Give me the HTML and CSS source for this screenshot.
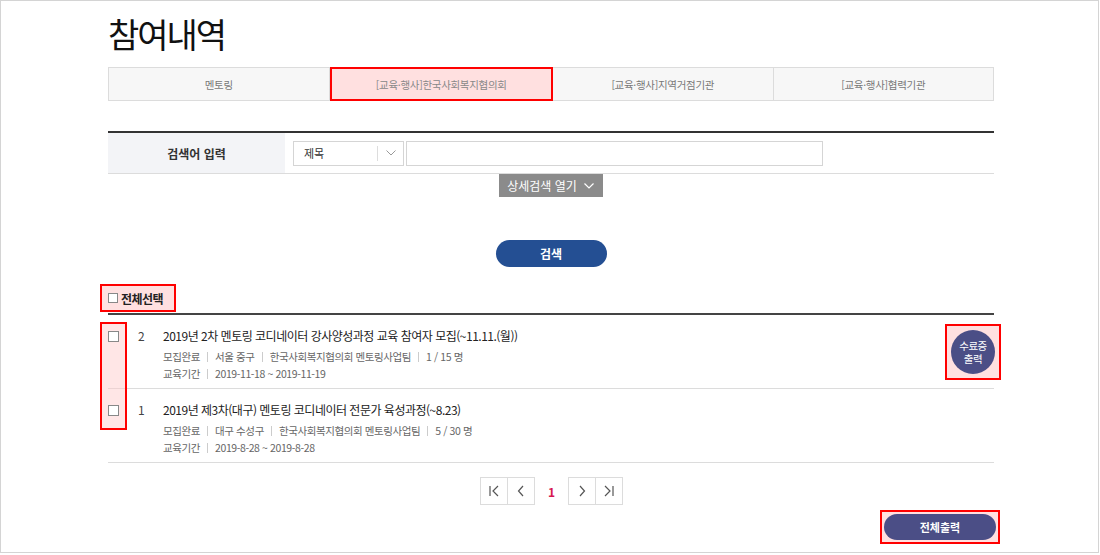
FILE: index.html
```html
<!DOCTYPE html>
<html lang="ko">
<head>
<meta charset="utf-8">
<title>참여내역</title>
<link rel="stylesheet" href="styles.css">
</head>
<body>
<div class="page">
  <div class="container">
    <h1 class="title">참여내역</h1>

    <ul class="tabs">
      <li class="tab">멘토링</li>
      <li class="tab active">[교육·행사]한국사회복지협의회</li>
      <li class="tab">[교육·행사]지역거점기관</li>
      <li class="tab">[교육·행사]협력기관</li>
    </ul>

    <div class="search">
      <div class="search-row">
        <div class="search-label">검색어 입력</div>
        <div class="search-field">
          <div class="select">
            <span class="select-text">제목</span>
            <span class="select-arrow">
              <svg width="10" height="6" viewBox="0 0 10 6"><path d="M0.5 0.5 L5 5 L9.5 0.5" fill="none" stroke="#999" stroke-width="1"/></svg>
            </span>
          </div>
          <div class="text-input"></div>
        </div>
      </div>
      <div class="detail-wrap">
        <button class="detail-btn">상세검색 열기
          <svg width="10" height="6" viewBox="0 0 10 6"><path d="M0.5 0.5 L5 5 L9.5 0.5" fill="none" stroke="#fff" stroke-width="1.2"/></svg>
        </button>
      </div>
      <div class="search-btn-wrap">
        <button class="search-btn">검색</button>
      </div>
    </div>

    <div class="select-all-wrap">
      <label class="select-all"><span class="chk"></span>전체선택</label>
    </div>

    <div class="list">
      <div class="chk-highlight"></div>
      <div class="item">
        <span class="chk item-chk"></span>
        <span class="num">2</span>
        <div class="info">
          <div class="item-title">2019년 2차 멘토링 코디네이터 강사양성과정 교육 참여자 모집(~11.11.(월))</div>
          <div class="meta"><span>모집완료</span><span>서울 중구</span><span>한국사회복지협의회 멘토링사업팀</span><span>1 / 15 명</span></div>
          <div class="meta"><span>교육기간</span><span>2019-11-18 ~ 2019-11-19</span></div>
        </div>
        <div class="cert-wrap">
          <button class="cert-btn">수료증<br>출력</button>
        </div>
      </div>
      <div class="item">
        <span class="chk item-chk"></span>
        <span class="num">1</span>
        <div class="info">
          <div class="item-title">2019년 제3차(대구) 멘토링 코디네이터 전문가 육성과정(~8.23)</div>
          <div class="meta"><span>모집완료</span><span>대구 수성구</span><span>한국사회복지협의회 멘토링사업팀</span><span>5 / 30 명</span></div>
          <div class="meta"><span>교육기간</span><span>2019-8-28 ~ 2019-8-28</span></div>
        </div>
      </div>
    </div>

    <div class="pager">
      <a class="pg">
        <svg width="12" height="12" viewBox="0 0 12 12"><path d="M2 1 V11 M10 1 L5 6 L10 11" fill="none" stroke="#555" stroke-width="1.2"/></svg>
      </a>
      <a class="pg">
        <svg width="12" height="12" viewBox="0 0 12 12"><path d="M8 1 L3.5 6 L8 11" fill="none" stroke="#555" stroke-width="1.2"/></svg>
      </a>
      <span class="pg-current">1</span>
      <a class="pg">
        <svg width="12" height="12" viewBox="0 0 12 12"><path d="M4 1 L8.5 6 L4 11" fill="none" stroke="#555" stroke-width="1.2"/></svg>
      </a>
      <a class="pg">
        <svg width="12" height="12" viewBox="0 0 12 12"><path d="M2 1 L7 6 L2 11 M10 1 V11" fill="none" stroke="#555" stroke-width="1.2"/></svg>
      </a>
    </div>

    <div class="print-wrap">
      <div class="print-hl">
        <button class="print-btn">전체출력</button>
      </div>
    </div>
  </div>
</div>
</body>
</html>
```

FILE: styles.css
```css
* { box-sizing: border-box; }
html, body { margin: 0; padding: 0; background: #fff; }
body {
  font-family: "Noto Sans CJK KR", "Noto Sans", sans-serif;
  color: #333;
}
button { font-family: inherit; cursor: pointer; }

.page {
  width: 1099px;
  height: 553px;
  border: 1px solid #d4d4d4;
  overflow: hidden;
}
.container {
  width: 886px;
  margin-left: 107px;
}

.title {
  margin: 0;
  padding-top: 9px;
  height: 66px;
  font-size: 34px;
  line-height: 48px;
  font-weight: 400;
  letter-spacing: -2px;
  color: #111;
}

.tabs {
  list-style: none;
  margin: 0;
  padding: 0;
  display: flex;
  height: 34px;
}
.tab {
  flex: 1;
  display: flex;
  align-items: center;
  justify-content: center;
  background: #f7f7f7;
  border: 1px solid #dcdcdc;
  border-left: none;
  font-size: 10.5px;
  color: #777;
  letter-spacing: -0.3px;
}
.tab:first-child { border-left: 1px solid #dcdcdc; }
.tab.active {
  background: #ffe0e0;
  border: 2px solid #f00;
  color: #888;
}

.search { margin-top: 30px; }
.search-row {
  display: flex;
  border-top: 2px solid #333;
  border-bottom: 1px solid #dcdcdc;
  height: 43px;
}
.search-label {
  width: 177px;
  background: #f3f4f7;
  display: flex;
  align-items: center;
  justify-content: center;
  font-size: 12px;
  font-weight: 700;
  color: #333;
}
.search-field {
  display: flex;
  align-items: center;
  padding-left: 8px;
  gap: 2px;
}
.select {
  width: 111px;
  height: 25px;
  border: 1px solid #d5d5d5;
  display: flex;
  align-items: center;
  font-size: 11px;
  color: #333;
}
.select-text { flex: 1; padding-left: 10px; }
.select-arrow {
  width: 26px;
  height: 15px;
  border-left: 1px solid #ddd;
  display: flex;
  align-items: center;
  justify-content: center;
}
.text-input {
  width: 417px;
  height: 25px;
  border: 1px solid #d5d5d5;
}

.detail-wrap { display: flex; justify-content: center; }
.detail-btn {
  width: 104px;
  height: 23px;
  margin-left: -1px;
  border: none;
  background: #8b8b8b;
  color: #fff;
  font-size: 12px;
  display: flex;
  align-items: center;
  justify-content: center;
  gap: 7px;
  padding: 0;
}

.search-btn-wrap {
  display: flex;
  justify-content: center;
  margin-top: 43px;
}
.search-btn {
  width: 111px;
  height: 27px;
  border: none;
  border-radius: 14px;
  background: #244f93;
  color: #fff;
  font-size: 12px;
  font-weight: 700;
  padding: 0;
}

.select-all-wrap {
  margin-top: 17px;
  margin-left: -8px;
  height: 29px;
}
.select-all {
  display: inline-flex;
  align-items: center;
  width: 76px;
  height: 28px;
  border: 2px solid #f00;
  background: #ffe0e0;
  padding-left: 6px;
  font-size: 12px;
  font-weight: 700;
  color: #222;
  letter-spacing: -0.5px;
}
.chk {
  display: inline-block;
  width: 10px;
  height: 10px;
  border: 1px solid #888;
  background: #fff;
  margin-right: 3px;
}

.list {
  position: relative;
  border-top: 2px solid #444;
}
.chk-highlight {
  position: absolute;
  left: -8px;
  top: 7px;
  width: 27px;
  height: 108px;
  border: 2px solid #f00;
  background: rgba(255, 200, 200, 0.45);
  pointer-events: none;
}
.item {
  display: flex;
  align-items: flex-start;
  border-bottom: 1px solid #dcdcdc;
  height: 74px;
  padding-top: 11px;
}
.item-chk {
  margin-top: 5px;
  margin-right: 0;
  width: 11px;
  height: 11px;
  position: relative;
  z-index: 1;
}
.num {
  width: 44px;
  padding-left: 19px;
  font-size: 12px;
  line-height: 20px;
  color: #444;
}
.info { flex: 1; }
.item-title {
  font-size: 12px;
  line-height: 20px;
  color: #222;
  letter-spacing: -0.5px;
}
.meta {
  font-size: 10.5px;
  line-height: 17px;
  color: #666;
  letter-spacing: -0.4px;
}
.item-title + .meta { margin-top: 2px; }
.meta span + span::before {
  content: "";
  display: inline-block;
  width: 1px;
  height: 10px;
  background: #ccc;
  margin: 0 7px;
  vertical-align: -1px;
}

.cert-wrap {
  align-self: center;
  margin-top: -10px;
  margin-right: -7px;
  width: 56px;
  height: 56px;
  border: 2px solid #f00;
  background: #ffe0e0;
  display: flex;
  align-items: center;
  justify-content: center;
}
.cert-btn {
  width: 44px;
  height: 44px;
  border-radius: 50%;
  border: none;
  background: #4b4e86;
  color: #fff;
  font-size: 10.5px;
  line-height: 13px;
  padding: 0;
  letter-spacing: -0.5px;
}

.pager {
  display: flex;
  justify-content: center;
  align-items: center;
  margin-top: 14px;
  height: 28px;
  padding-left: 1px;
}
.pg {
  width: 28px;
  height: 28px;
  border: 1px solid #dcdcdc;
  display: flex;
  align-items: center;
  justify-content: center;
  background: #fff;
}
.pg + .pg { margin-left: -1px; }
.pg-current {
  width: 33px;
  text-align: center;
  font-size: 12px;
  font-weight: 700;
  color: #d6174f;
}

.print-wrap {
  display: flex;
  justify-content: flex-end;
  margin-top: 5px;
  margin-right: -6px;
}
.print-hl {
  width: 120px;
  height: 34px;
  border: 2px solid #f00;
  background: #ffe0e0;
  display: flex;
  align-items: center;
  justify-content: center;
}
.print-btn {
  width: 112px;
  height: 26px;
  border: none;
  border-radius: 13px;
  background: #4b4e86;
  color: #fff;
  font-size: 11px;
  font-weight: 700;
  padding: 0;
}
```
